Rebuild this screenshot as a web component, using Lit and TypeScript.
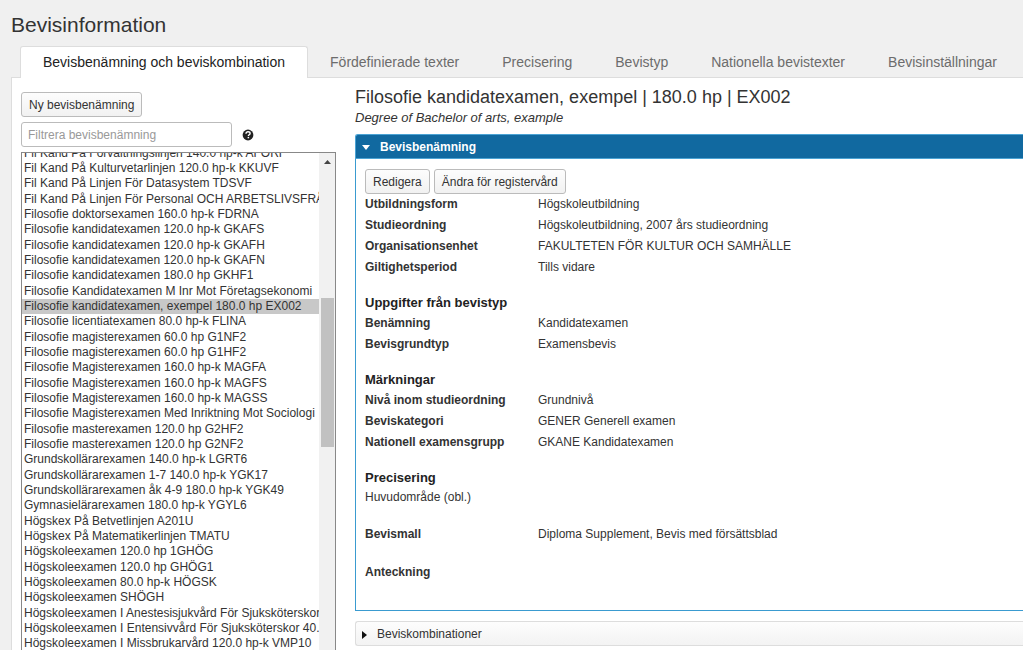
import { LitElement, html, css } from "lit";
import { customElement, state, query } from "lit/decorators.js";

const TABS = [
  "Bevisbenämning och beviskombination",
  "Fördefinierade texter",
  "Precisering",
  "Bevistyp",
  "Nationella bevistexter",
  "Bevisinställningar",
];

const NAMES = [
  "Fil Kand På Förvaltningslinjen 140.0 hp-k AFÖRF",
  "Fil Kand På Kulturvetarlinjen 120.0 hp-k KKUVF",
  "Fil Kand På Linjen För Datasystem TDSVF",
  "Fil Kand På Linjen För Personal OCH ARBETSLIVSFRÅGOR",
  "Filosofie doktorsexamen 160.0 hp-k FDRNA",
  "Filosofie kandidatexamen 120.0 hp-k GKAFS",
  "Filosofie kandidatexamen 120.0 hp-k GKAFH",
  "Filosofie kandidatexamen 120.0 hp-k GKAFN",
  "Filosofie kandidatexamen 180.0 hp GKHF1",
  "Filosofie Kandidatexamen M Inr Mot Företagsekonomi",
  "Filosofie kandidatexamen, exempel 180.0 hp EX002",
  "Filosofie licentiatexamen 80.0 hp-k FLINA",
  "Filosofie magisterexamen 60.0 hp G1NF2",
  "Filosofie magisterexamen 60.0 hp G1HF2",
  "Filosofie Magisterexamen 160.0 hp-k MAGFA",
  "Filosofie Magisterexamen 160.0 hp-k MAGFS",
  "Filosofie Magisterexamen 160.0 hp-k MAGSS",
  "Filosofie Magisterexamen Med Inriktning Mot Sociologi",
  "Filosofie masterexamen 120.0 hp G2HF2",
  "Filosofie masterexamen 120.0 hp G2NF2",
  "Grundskollärarexamen 140.0 hp-k LGRT6",
  "Grundskollärarexamen 1-7 140.0 hp-k YGK17",
  "Grundskollärarexamen åk 4-9 180.0 hp-k YGK49",
  "Gymnasielärarexamen 180.0 hp-k YGYL6",
  "Högskex På Betvetlinjen A201U",
  "Högskex På Matematikerlinjen TMATU",
  "Högskoleexamen 120.0 hp 1GHÖG",
  "Högskoleexamen 120.0 hp GHÖG1",
  "Högskoleexamen 80.0 hp-k HÖGSK",
  "Högskoleexamen SHÖGH",
  "Högskoleexamen I Anestesisjukvård För Sjuksköterskor",
  "Högskoleexamen I Entensivvård För Sjuksköterskor 40.0 hp",
  "Högskoleexamen I Missbrukarvård 120.0 hp-k VMP10",
];

type Row = [label: string, value: string];

const GENERAL: Row[] = [
  ["Utbildningsform", "Högskoleutbildning"],
  ["Studieordning", "Högskoleutbildning, 2007 års studieordning"],
  ["Organisationsenhet", "FAKULTETEN FÖR KULTUR OCH SAMHÄLLE"],
  ["Giltighetsperiod", "Tills vidare"],
];
const TYPE_INFO: Row[] = [
  ["Benämning", "Kandidatexamen"],
  ["Bevisgrundtyp", "Examensbevis"],
];
const MARKS: Row[] = [
  ["Nivå inom studieordning", "Grundnivå"],
  ["Beviskategori", "GENER Generell examen"],
  ["Nationell examensgrupp", "GKANE Kandidatexamen"],
];

const rows = (items: Row[]) => html`
  <dl class="rows">
    ${items.map(([label, value]) => html`<div class="row"><dt>${label}</dt><dd>${value}</dd></div>`)}
  </dl>
`;

@customElement("app-root")
export class AppRoot extends LitElement {
  @state() private activeTab = 0;
  @query(".names") private names!: HTMLSelectElement;

  static styles = css`
    :host {
      display: flex;
      flex-direction: column;
      height: 100vh;
      overflow: hidden;
      box-sizing: border-box;
      background: #f0f0f0;
      color: #333;
      font: 12px/21px "Liberation Sans", Arial, sans-serif;
    }
    *, *::before, *::after { box-sizing: border-box; }
    h1, h2, h3, p, dl, dd { margin: 0; }
    button, input, select { font: inherit; color: inherit; }

    .title {
      padding: 10px 11px 0;
      font-size: 21px;
      line-height: 30px;
      font-weight: 400;
    }
    .tabs {
      display: flex;
      margin: 6px 0 -1px 20px;
      gap: 1px;
      position: relative;
    }
    .tab {
      flex: none;
      height: 32px;
      padding: 0 20px;
      border: 1px solid transparent;
      border-bottom: 0;
      background: none;
      color: #6c6c6c;
      font-size: 14px;
      line-height: 31px;
      white-space: nowrap;
    }
    .tab.active {
      padding: 0 22px;
      border-color: #ddd;
      border-radius: 3px 3px 0 0;
      background: #fff;
      color: #222;
    }
    .panel {
      flex: 1;
      min-height: 0;
      display: grid;
      grid-template-columns: 315px minmax(0, 1fr);
      grid-template-rows: minmax(0, 1fr);
      gap: 19px;
      margin-left: 11px;
      padding-left: 9px;
      border: solid #ddd;
      border-width: 1px 0 0 1px;
      background: #fff;
    }

    .side {
      display: flex;
      flex-direction: column;
      align-items: flex-start;
      gap: 5px;
      padding-top: 14px;
      min-height: 0;
    }
    .button {
      height: 25px;
      padding: 0 7px;
      border: 1px solid #bbb;
      border-radius: 3px;
      background: linear-gradient(#fdfdfd, #f1f1f1);
      line-height: 22px;
      white-space: nowrap;
    }
    .filter {
      display: flex;
      align-items: center;
      gap: 10px;
    }
    .filter-input {
      width: 211px;
      height: 25px;
      padding: 0 6px;
      border: 1px solid #bbb;
      border-radius: 3px;
      background: #fff;
    }
    .filter-input::placeholder { color: #999; opacity: 1; }
    .help {
      display: flex;
      padding: 0;
      border: 0;
      background: none;
    }
    .list {
      flex: 1;
      min-height: 0;
      align-self: stretch;
      display: flex;
      border: solid #888;
      border-width: 1px 1px 0;
    }
    .names {
      flex: 1;
      min-width: 0;
      height: 100%;
      padding: 0;
      border: 0;
      border-radius: 0;
      outline: 0;
      background: #fff;
      scrollbar-width: none;
    }
    .names option:nth-child(3n) { padding-bottom: 2px; }
    .names option:checked {
      background: #c8c8c8 linear-gradient(#c8c8c8, #c8c8c8);
      color: #333;
    }
    .scrollbar {
      flex: none;
      width: 16px;
      display: flex;
      flex-direction: column;
      align-items: center;
      background: #f1f1f1;
    }
    .scroll-up {
      height: 17px;
      display: flex;
      align-items: center;
    }
    .scroll-thumb {
      width: 13px;
      height: 149px;
      margin-top: 128px;
      background: #c1c1c1;
    }

    .detail { padding-top: 7px; min-width: 0; }
    .detail-title {
      font-size: 18px;
      line-height: 24px;
      font-weight: 400;
    }
    .detail-sub {
      font-size: 13px;
      line-height: 17px;
      font-style: italic;
    }
    .bar {
      display: flex;
      align-items: center;
      width: 100%;
      height: 25px;
      border: solid #4ba3d4;
      border-width: 1px 0 1px 1px;
      border-radius: 3px 0 0 0;
      padding: 2px 6px 0;
      gap: 10px;
      background: #1169a0;
      color: #fff;
      font-weight: 700;
      text-align: left;
    }
    .card { margin-top: 8px; }
    .card-body {
      padding: 10px 9px 27px;
      border: solid #3a9bd0;
      border-width: 0 0 1px 1px;
    }
    .bar.closed {
      margin-top: 10px;
      border-color: #ddd;
      border-radius: 3px 0 0 3px;
      background: linear-gradient(#fdfdfd, #f3f3f3);
      color: #333;
      font-weight: 400;
    }
    .actions { display: flex; gap: 4px; }
    .row {
      display: grid;
      grid-template-columns: 173px minmax(0, 1fr);
    }
    dt { font-weight: 700; }
    .section {
      margin-top: 14px;
      font-size: 13px;
      line-height: 21px;
      font-weight: 700;
      color: #222;
    }
    .text { line-height: 19px; }
    .spaced { margin-top: 17px; }
  `;

  protected firstUpdated() {
    requestAnimationFrame(() => {
      this.names.scrollTop = 7;
    });
  }

  render() {
    return html`
      <h1 class="title">Bevisinformation</h1>
      <nav class="tabs" role="tablist">
        ${TABS.map(
          (name, i) => html`<button
            class="tab ${i === this.activeTab ? "active" : ""}"
            role="tab"
            aria-selected=${i === this.activeTab}
            @click=${() => (this.activeTab = i)}
          >${name}</button>`,
        )}
      </nav>
      <main class="panel">
        <div class="side">
          <button class="button">Ny bevisbenämning</button>
          <div class="filter">
            <input class="filter-input" type="text" placeholder="Filtrera bevisbenämning" aria-label="Filtrera bevisbenämning" />
            <button class="help" aria-label="Hjälp">
              <svg width="12" height="12" viewBox="0 0 12 12" aria-hidden="true">
                <circle cx="6" cy="6" r="5.4" fill="#222" />
                <path d="M4 4.7C4 3.4 4.9 2.8 6 2.8s2.1.7 2.1 1.7c0 1.3-1.7 1.3-1.7 2.5" fill="none" stroke="#fff" stroke-width="1.4" />
                <rect x="5.6" y="7.9" width="1.5" height="1.4" fill="#fff" />
              </svg>
            </button>
          </div>
          <div class="list">
            <select class="names" size="20" aria-label="Bevisbenämningar">
              ${NAMES.map((name) => html`<option ?selected=${name.endsWith("EX002")}>${name}</option>`)}
            </select>
            <div class="scrollbar" aria-hidden="true">
              <div class="scroll-up">
                <svg width="7" height="4" viewBox="0 0 7 4"><path d="M0 4 3.5 0 7 4z" fill="#444" /></svg>
              </div>
              <div class="scroll-thumb"></div>
            </div>
          </div>
        </div>

        <div class="detail">
          <h2 class="detail-title">Filosofie kandidatexamen, exempel | 180.0 hp | EX002</h2>
          <p class="detail-sub">Degree of Bachelor of arts, example</p>
          <section class="card">
            <button class="bar" aria-expanded="true">
              <svg width="8" height="5" viewBox="0 0 8 5" aria-hidden="true"><path d="M0 0h8L4 5z" fill="#fff" /></svg>
              Bevisbenämning
            </button>
            <div class="card-body">
              <div class="actions">
                <button class="button">Redigera</button>
                <button class="button">Ändra för registervård</button>
              </div>
              ${rows(GENERAL)}
              <h3 class="section">Uppgifter från bevistyp</h3>
              ${rows(TYPE_INFO)}
              <h3 class="section">Märkningar</h3>
              ${rows(MARKS)}
              <h3 class="section">Precisering</h3>
              <p class="text">Huvudområde (obl.)</p>
              <div class="spaced">${rows([["Bevismall", "Diploma Supplement, Bevis med försättsblad"]])}</div>
              <div class="spaced">${rows([["Anteckning", ""]])}</div>
            </div>
          </section>
          <button class="bar closed" aria-expanded="false">
            <svg width="5" height="8" viewBox="0 0 5 8" aria-hidden="true"><path d="M0 0v8l5-4z" fill="#111" /></svg>
            Beviskombinationer
          </button>
        </div>
      </main>
    `;
  }
}
